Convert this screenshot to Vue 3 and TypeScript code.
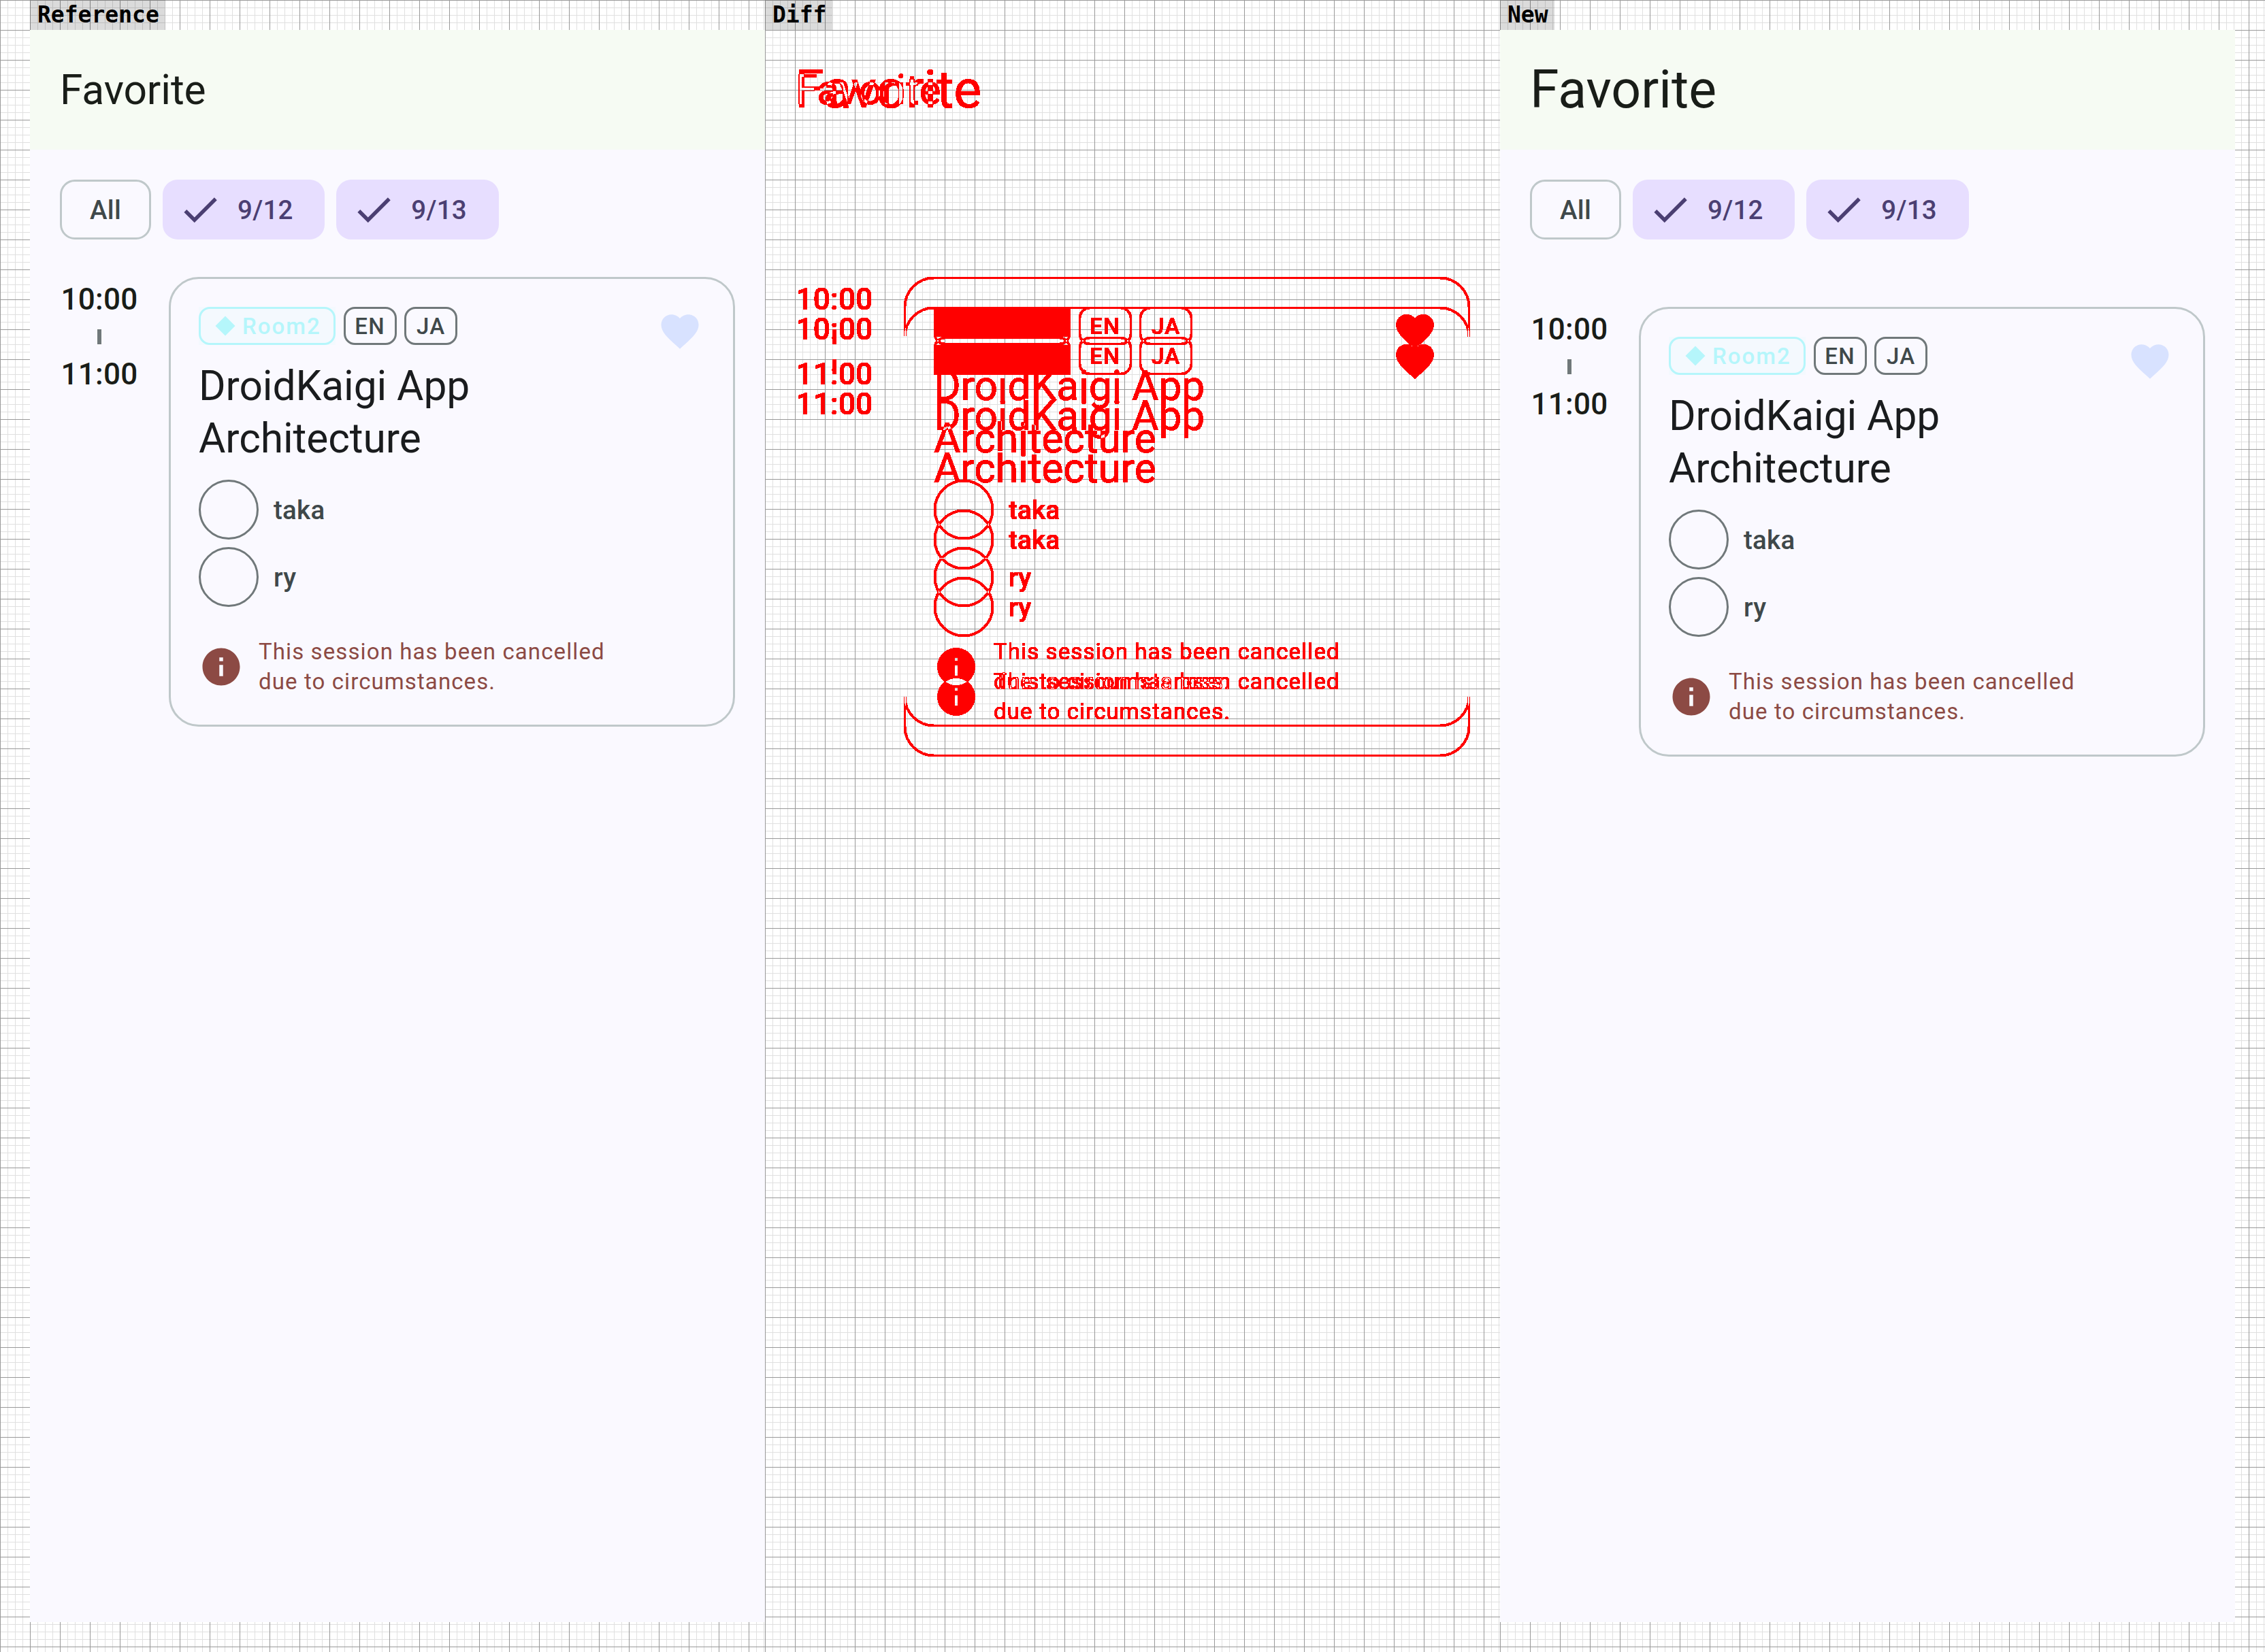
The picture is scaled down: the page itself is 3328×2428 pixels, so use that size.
<script setup lang="ts">
type Variant = 'ref' | 'new';

const columns: { label: string; screens: Variant[] }[] = [
  { label: 'Reference', screens: ['ref'] },
  { label: 'Diff', screens: ['ref', 'new'] },
  { label: 'New', screens: ['new'] },
];

const days = ['9/12', '9/13'];
const speakers = ['taka', 'ry'];
const languages = ['EN', 'JA'];
</script>

<template>
  <div class="board">
    <!-- thresholds the difference of the two layers: anything that differs turns solid red -->
    <svg class="defs" width="0" height="0">
      <filter id="diff-mask" x="0" y="0" width="100%" height="100%" color-interpolation-filters="sRGB">
        <feColorMatrix type="matrix" values="0 0 0 0 1  0 0 0 0 0  0 0 0 0 0  40 40 40 0 0" />
        <feComponentTransfer>
          <feFuncA type="discrete" tableValues="0 1" />
        </feComponentTransfer>
      </filter>
    </svg>

    <section v-for="col in columns" :key="col.label" class="column">
      <div class="label-row"><span class="label">{{ col.label }}</span></div>
      <div class="stack" :class="{ diff: col.screens.length > 1 }">
        <div v-for="variant in col.screens" :key="variant" class="screen" :class="variant">
          <header class="topbar">
            <h1 class="page-title">Favorite</h1>
          </header>

          <div class="chips">
            <button class="chip">All</button>
            <button v-for="day in days" :key="day" class="chip selected">
              <svg class="check" viewBox="0 0 24 24"><path d="M9 16.17L4.83 12l-1.42 1.41L9 19 21 7l-1.41-1.41z" /></svg>
              {{ day }}
            </button>
          </div>

          <div class="list">
            <div class="time">
              <span>10:00</span>
              <i class="time-divider"></i>
              <span>11:00</span>
            </div>

            <article class="card">
              <div class="card-head">
                <div class="tags">
                  <span class="tag room">
                    <svg class="diamond" viewBox="0 0 44 44"><path d="M22 7.5L36.5 22 22 36.5 7.5 22z" /></svg>
                    Room2
                  </span>
                  <span v-for="lang in languages" :key="lang" class="tag lang">{{ lang }}</span>
                </div>
                <svg class="heart" viewBox="0 0 24 24"><path d="M12 21.35l-1.45-1.32C5.4 15.36 2 12.28 2 8.5 2 5.42 4.42 3 7.5 3c1.74 0 3.41.81 4.5 2.09C13.09 3.81 14.76 3 16.5 3 19.58 3 22 5.42 22 8.5c0 3.78-3.4 6.86-8.55 11.54L12 21.35z" /></svg>
              </div>

              <h2 class="session-title">DroidKaigi App<br />Architecture</h2>

              <div class="speakers">
                <div v-for="name in speakers" :key="name" class="speaker">
                  <span class="avatar"></span>
                  <span class="speaker-name">{{ name }}</span>
                </div>
              </div>

              <div class="notice">
                <svg class="info" viewBox="0 0 24 24"><path d="M12 2C6.48 2 2 6.48 2 12s4.48 10 10 10 10-4.48 10-10S17.52 2 12 2zm1 15h-2v-6h2v6zm0-8h-2V7h2v2z" /></svg>
                <p>This session has been cancelled<br />due to circumstances.</p>
              </div>
            </article>
          </div>
        </div>
      </div>
    </section>
  </div>
</template>

<style>
body {
  margin: 0;
}
</style>

<style scoped>
.board,
.column {
  background-color: #fff;
  background-image:
    linear-gradient(to right, #999 1px, transparent 1px),
    linear-gradient(to bottom, #999 1px, transparent 1px),
    linear-gradient(to right, #e0e0e0 1px, transparent 1px),
    linear-gradient(to bottom, #e0e0e0 1px, transparent 1px);
  background-size: 44px 44px, 44px 44px, 11px 11px, 11px 11px;
}

.board {
  width: 3328px;
  height: 2428px;
  box-sizing: border-box;
  padding-left: 44px;
  display: flex;
  font-family: Roboto, "Noto Sans", sans-serif;
}

.defs {
  position: absolute;
}

.column {
  width: 1080px;
}

.column:last-child {
  width: 1124px;
}

.label-row {
  height: 44px;
  display: flex;
}

.label {
  padding: 0 9px 0 11px;
  line-height: 44px;
  background: rgba(0, 0, 0, 0.14);
  font-family: "DejaVu Sans Mono", monospace;
  font-weight: 700;
  font-size: 33px;
  color: #000;
}

.stack {
  display: grid;
  width: 1080px;
  height: 2340px;
}

.stack.diff {
  isolation: isolate;
  filter: url(#diff-mask);
}

.stack.diff .screen + .screen {
  mix-blend-mode: difference;
}

.screen {
  grid-area: 1 / 1;
  display: flex;
  flex-direction: column;
  background: #faf9ff;
  min-width: 0;
}

.topbar {
  height: 176px;
  flex: none;
  display: flex;
  align-items: center;
  padding-left: 44px;
  background: #f6fbf3;
}

.page-title {
  margin: 0;
  font-weight: 400;
  font-size: 60.5px;
  line-height: 77px;
  letter-spacing: -0.1px;
  color: #191d18;
}

.new .page-title {
  font-size: 77px;
  line-height: 99px;
  letter-spacing: 0;
}

.chips {
  display: flex;
  gap: 17px;
  margin: 44px 44px 0;
}

.chip {
  height: 88px;
  box-sizing: border-box;
  display: flex;
  align-items: center;
  padding: 0 41px;
  border: 3px solid #bfc8ca;
  border-radius: 22px;
  background: transparent;
  font-family: inherit;
  font-weight: 500;
  font-size: 38.5px;
  letter-spacing: 0.275px;
  color: #3f484a;
}

.chip.selected {
  gap: 22px;
  padding: 0 46.5px 0 22px;
  border: none;
  background: #e7deff;
  color: #4b3f72;
}

.check {
  width: 66px;
  height: 66px;
  fill: #4b3f72;
}

.list {
  display: flex;
  margin: 55px 44px 0;
}

.new .list {
  margin-top: 99px;
}

.time {
  flex: none;
  width: 116px;
  margin-right: 44px;
  display: flex;
  flex-direction: column;
  align-items: center;
  font-weight: 500;
  font-size: 44px;
  line-height: 66px;
  letter-spacing: 0.3px;
  color: #191d18;
}

.time-divider {
  width: 6px;
  height: 22px;
  margin: 11px 0;
  background: #70787a;
}

.card {
  flex: 1;
  box-sizing: border-box;
  padding: 41px;
  border: 3px solid #bfc8ca;
  border-radius: 44px;
}

.card-head {
  height: 56px;
  display: flex;
  justify-content: space-between;
}

.tags {
  position: relative;
  z-index: 0;
  display: flex;
  gap: 11.5px;
}

.tag {
  box-sizing: border-box;
  height: 56px;
  display: flex;
  align-items: center;
  border: 3px solid #70787a;
  border-radius: 16.5px;
  font-weight: 500;
  font-size: 33px;
  letter-spacing: 1.375px;
  color: #3f484a;
}

.tag.lang {
  width: 78px;
  justify-content: center;
}

.tag.room {
  position: relative;
  gap: 3.5px;
  padding: 0 18.5px 0 13.5px;
  border-color: #b5f6fb;
  letter-spacing: 2px;
  color: #b5f6fb;
}

/* faint square tint showing past the rounded border */
.tag.room::before {
  content: "";
  position: absolute;
  inset: -3px;
  background: #f4f9fe;
  z-index: -1;
}

.diamond {
  width: 44px;
  height: 44px;
  fill: #b5f6fb;
}

.heart {
  flex: none;
  width: 66px;
  height: 66px;
  margin: 3px 4px 0 0;
  fill: #d8e2ff;
}

.session-title {
  margin: 22px 0 0;
  font-weight: 400;
  font-size: 60.5px;
  line-height: 77px;
  letter-spacing: -0.1px;
  color: #1a1c1e;
}

.speakers {
  margin-top: 22px;
  display: flex;
  flex-direction: column;
  gap: 11px;
}

.speaker {
  display: flex;
  align-items: center;
  gap: 22px;
}

.avatar {
  box-sizing: border-box;
  width: 88px;
  height: 88px;
  border: 3px solid #70787a;
  border-radius: 50%;
}

.speaker-name {
  font-weight: 500;
  font-size: 38.5px;
  letter-spacing: 0.275px;
  color: #3f484a;
}

.notice {
  margin-top: 44px;
  display: flex;
  align-items: center;
  gap: 22px;
}

.info {
  flex: none;
  width: 66px;
  height: 66px;
  fill: #8c4a44;
}

.notice p {
  margin: 0;
  font-size: 33px;
  line-height: 44px;
  letter-spacing: 1.1px;
  color: #8c4a44;
}
</style>
